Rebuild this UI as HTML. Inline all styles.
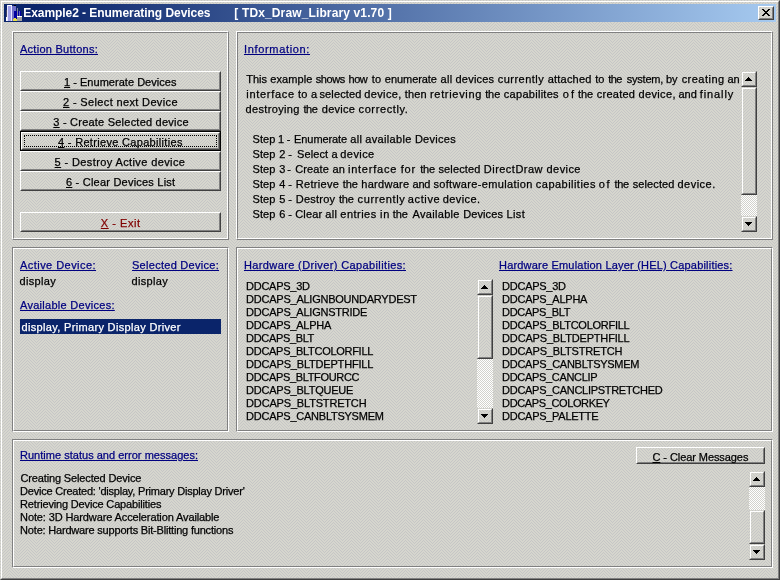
<!DOCTYPE html>
<html><head><meta charset="utf-8"><title>Example2 - Enumerating Devices</title>
<style>
html,body{margin:0;padding:0}
body{width:780px;height:580px;overflow:hidden;position:relative;background:#d1d1cb;font-family:"Liberation Sans",Arial,sans-serif;font-size:11px;color:#000}
#bg{position:absolute;left:0;top:0;width:780px;height:580px;display:block}
.a{position:absolute;box-sizing:border-box}
/* window frame */
#fr1{left:0;top:0;width:780px;height:580px;border:1px solid;border-color:transparent #404040 #404040 transparent}
#fr2{left:1px;top:1px;width:778px;height:578px;border:1px solid;border-color:#fff #808080 #808080 #fff}
#tb{left:4px;top:4px;width:772px;height:18px;background:linear-gradient(to right,#0a246a 0%,#0a246a 4%,#a6caf0 100%)}
/* panels */
.pr{border:1px solid;border-color:#fff #808080 #808080 #fff}
.pr:after{content:"";position:absolute;left:0;top:0;right:0;bottom:0;border:1px solid;border-color:#808080 #fff #fff #808080}
.pl{border:1px solid;border-color:#808080 #fff #fff #808080}
.pl:after{content:"";position:absolute;left:0;top:0;right:0;bottom:0;border:1px solid;border-color:#fff #808080 #808080 #fff}
/* delphi buttons */
.b{border:1px solid;border-color:#fff #404040 #404040 #fff}
.b:after{content:"";position:absolute;left:0;top:0;right:0;bottom:0;border:1px solid;border-color:transparent #808080 #808080 transparent}
.bf{border:1px solid #000}
.bf:before{content:"";position:absolute;left:0;top:0;right:0;bottom:0;border:1px solid;border-color:#fff #404040 #404040 #fff}
.bf:after{content:"";position:absolute;left:1px;top:1px;right:1px;bottom:1px;border:1px solid;border-color:transparent #808080 #808080 transparent}
.foc{border:1px dotted #000}
/* scrollbar pieces */
.sb{border:1px solid;border-color:transparent #404040 #404040 transparent}
.sb:after{content:"";position:absolute;left:0;top:0;right:0;bottom:0;border:1px solid;border-color:#fff #808080 #808080 #fff}
.trk{background-color:#d2d2cc;background-image:linear-gradient(45deg,#fff 25%,transparent 25%,transparent 75%,#fff 75%),linear-gradient(45deg,#fff 25%,transparent 25%,transparent 75%,#fff 75%);background-size:2px 2px;background-position:0 0,1px 1px}
.ar{width:0;height:0;border-style:solid}
.up{border-width:0 4px 4px 4px;border-color:transparent transparent #000 transparent}
.dn{border-width:4px 4px 0 4px;border-color:#000 transparent transparent transparent}
/* text */
.t{position:absolute;white-space:pre;line-height:13px;height:13px;font-size:11px;-webkit-text-stroke:0.25px currentColor}
.ttl{font-weight:bold;color:#fff;font-size:12px;-webkit-text-stroke:0}
.hd{color:#000080;text-decoration:underline}
.ex{color:#800000}
.wh{color:#fff}
u{text-decoration:underline}
#sel{left:20px;top:319px;width:201px;height:15px;background:#0a246a}
</style></head><body>
<svg id="bg" width="780" height="580" shape-rendering="crispEdges"><defs><pattern id="dp" width="18" height="6" patternUnits="userSpaceOnUse"><rect width="18" height="6" fill="#d6d6ce"/><g fill="#c6c6c6"><rect x="0" y="0" width="1" height="1"/><rect x="3" y="0" width="1" height="1"/><rect x="6" y="0" width="1" height="1"/><rect x="9" y="0" width="1" height="1"/><rect x="12" y="0" width="1" height="1"/><rect x="15" y="0" width="1" height="1"/><rect x="2" y="1" width="1" height="1"/><rect x="5" y="1" width="1" height="1"/><rect x="8" y="1" width="1" height="1"/><rect x="10" y="1" width="1" height="1"/><rect x="13" y="1" width="1" height="1"/><rect x="16" y="1" width="1" height="1"/><rect x="1" y="2" width="1" height="1"/><rect x="4" y="2" width="1" height="1"/><rect x="7" y="2" width="1" height="1"/><rect x="11" y="2" width="1" height="1"/><rect x="14" y="2" width="1" height="1"/><rect x="17" y="2" width="1" height="1"/><rect x="0" y="3" width="1" height="1"/><rect x="3" y="3" width="1" height="1"/><rect x="6" y="3" width="1" height="1"/><rect x="9" y="3" width="1" height="1"/><rect x="12" y="3" width="1" height="1"/><rect x="15" y="3" width="1" height="1"/><rect x="2" y="4" width="1" height="1"/><rect x="5" y="4" width="1" height="1"/><rect x="8" y="4" width="1" height="1"/><rect x="10" y="4" width="1" height="1"/><rect x="13" y="4" width="1" height="1"/><rect x="16" y="4" width="1" height="1"/><rect x="1" y="5" width="1" height="1"/><rect x="4" y="5" width="1" height="1"/><rect x="7" y="5" width="1" height="1"/><rect x="11" y="5" width="1" height="1"/><rect x="14" y="5" width="1" height="1"/><rect x="17" y="5" width="1" height="1"/></g></pattern></defs><rect width="780" height="580" fill="url(#dp)"/></svg>
<div class="a" id="fr1"></div><div class="a" id="fr2"></div>
<div class="a" id="tb"></div>
<svg class="a" style="left:6px;top:5px" width="16" height="16" shape-rendering="crispEdges">
<rect x="0" y="5" width="1" height="7" fill="#404060"/><rect x="0" y="12" width="1" height="4" fill="#fff"/>
<rect x="1" y="0" width="5" height="16" fill="#a0a0e8"/><rect x="1" y="0" width="1" height="16" fill="#e8e8ff"/><rect x="5" y="0" width="1" height="16" fill="#e8e8ff"/><rect x="2" y="0" width="4" height="1" fill="#fff"/>
<rect x="6" y="1" width="4" height="15" fill="#7070c8"/><rect x="8" y="0" width="2" height="1" fill="#000"/>
<rect x="8" y="6" width="7" height="8" fill="#0000a0"/>
<rect x="11" y="3" width="1" height="9" fill="#8080a0"/><rect x="13" y="6" width="1" height="5" fill="#6060c0"/>
<rect x="11" y="11" width="5" height="5" fill="#a0a0a0"/><rect x="11" y="11" width="5" height="1" fill="#fff"/>
<rect x="7" y="14" width="4" height="2" fill="#e8e040"/><rect x="8" y="13" width="2" height="1" fill="#e8e040"/>
</svg>
<!-- close button -->
<svg class="a" style="left:758px;top:6px" width="16" height="14" shape-rendering="crispEdges"><rect width="16" height="14" fill="url(#dp)"/></svg><div class="a b" style="left:758px;top:6px;width:16px;height:14px"></div>
<svg class="a" style="left:762px;top:9px" width="8" height="7" shape-rendering="crispEdges"><path d="M0 0h2v1h1v1h2v-1h1v-1h2v1h-1v1h-1v1h-1v1h1v1h1v1h1v1h-2v-1h-1v-1h-2v1h-1v1h-2v-1h1v-1h1v-1h1v-1h-1v-1h-1v-1h-1z" fill="#000"/></svg>
<!-- panels -->
<div class="a pr" style="left:12px;top:31px;width:217px;height:209px"></div>
<div class="a pr" style="left:236px;top:31px;width:537px;height:209px"></div>
<div class="a pl" style="left:12px;top:247px;width:217px;height:185px"></div>
<div class="a pl" style="left:236px;top:247px;width:537px;height:185px"></div>
<div class="a pl" style="left:12px;top:439px;width:761px;height:129px"></div>
<!-- action buttons -->
<div class="a b" style="left:20px;top:71px;width:201px;height:20px"></div>
<div class="a b" style="left:20px;top:91px;width:201px;height:20px"></div>
<div class="a b" style="left:20px;top:111px;width:201px;height:20px"></div>
<div class="a bf" style="left:20px;top:131px;width:201px;height:20px"></div>
<div class="a foc" style="left:24px;top:135px;width:193px;height:12px"></div>
<div class="a b" style="left:20px;top:151px;width:201px;height:20px"></div>
<div class="a b" style="left:20px;top:171px;width:201px;height:20px"></div>
<div class="a b" style="left:20px;top:212px;width:201px;height:20px"></div>
<div class="a b" style="left:636px;top:447px;width:129px;height:17px"></div>
<!-- selection -->
<div class="a" id="sel"></div>
<div class="a trk" style="left:741px;top:87px;width:16px;height:129px"></div>
<div class="a sb" style="left:741px;top:71px;width:16px;height:16px"></div>
<div class="a sb" style="left:741px;top:216px;width:16px;height:16px"></div>
<svg class="a" style="left:741px;top:87px" width="16" height="108" shape-rendering="crispEdges"><rect width="16" height="108" fill="url(#dp)"/></svg><div class="a sb" style="left:741px;top:87px;width:16px;height:108px"></div>
<svg class="a" style="left:745px;top:77px" width="7" height="4" shape-rendering="crispEdges"><path d="M3 0h1v1h1v1h1v1h1v1h-7v-1h1v-1h1v-1h1z" fill="#000"/></svg>
<svg class="a" style="left:745px;top:222px" width="7" height="4" shape-rendering="crispEdges"><path d="M0 0h7v1h-1v1h-1v1h-1v1h-1v-1h-1v-1h-1v-1h-1z" fill="#000"/></svg>
<div class="a trk" style="left:477px;top:295px;width:16px;height:113px"></div>
<div class="a sb" style="left:477px;top:279px;width:16px;height:16px"></div>
<div class="a sb" style="left:477px;top:408px;width:16px;height:16px"></div>
<svg class="a" style="left:477px;top:295px" width="16" height="64" shape-rendering="crispEdges"><rect width="16" height="64" fill="url(#dp)"/></svg><div class="a sb" style="left:477px;top:295px;width:16px;height:64px"></div>
<svg class="a" style="left:481px;top:285px" width="7" height="4" shape-rendering="crispEdges"><path d="M3 0h1v1h1v1h1v1h1v1h-7v-1h1v-1h1v-1h1z" fill="#000"/></svg>
<svg class="a" style="left:481px;top:414px" width="7" height="4" shape-rendering="crispEdges"><path d="M0 0h7v1h-1v1h-1v1h-1v1h-1v-1h-1v-1h-1v-1h-1z" fill="#000"/></svg>
<div class="a trk" style="left:749px;top:487px;width:16px;height:57px"></div>
<div class="a sb" style="left:749px;top:471px;width:16px;height:16px"></div>
<div class="a sb" style="left:749px;top:544px;width:16px;height:16px"></div>
<svg class="a" style="left:749px;top:510px" width="16" height="34" shape-rendering="crispEdges"><rect width="16" height="34" fill="url(#dp)"/></svg><div class="a sb" style="left:749px;top:510px;width:16px;height:34px"></div>
<svg class="a" style="left:753px;top:477px" width="7" height="4" shape-rendering="crispEdges"><path d="M3 0h1v1h1v1h1v1h1v1h-7v-1h1v-1h1v-1h1z" fill="#000"/></svg>
<svg class="a" style="left:753px;top:550px" width="7" height="4" shape-rendering="crispEdges"><path d="M0 0h7v1h-1v1h-1v1h-1v1h-1v-1h-1v-1h-1v-1h-1z" fill="#000"/></svg>
<div id="tx" style="position:absolute;left:0;top:0;width:780px;height:580px;will-change:transform">
<span class="t ttl" style="left:23.20px;top:7px;letter-spacing:-0.050px">Example2 - Enumerating Devices</span>
<span class="t ttl" style="left:234.33px;top:7px;letter-spacing:0.131px">[ TDx_Draw_Library v1.70 ]</span>
<span class="t hd" style="left:20.00px;top:43px;letter-spacing:0.268px">Action Buttons:</span>
<span class="t hd" style="left:244.00px;top:43px;letter-spacing:0.660px">Information:</span>
<span class="t hd" style="left:20.00px;top:259px;letter-spacing:0.451px">Active Device:</span>
<span class="t hd" style="left:132.00px;top:259px;letter-spacing:0.279px">Selected Device:</span>
<span class="t hd" style="left:20.00px;top:299px;letter-spacing:0.285px">Available Devices:</span>
<span class="t hd" style="left:244.00px;top:259px;letter-spacing:0.375px">Hardware (Driver) Capabilities:</span>
<span class="t hd" style="left:499.00px;top:259px;letter-spacing:0.194px">Hardware Emulation Layer (HEL) Capabilities:</span>
<span class="t hd" style="left:20.00px;top:449px;letter-spacing:0.021px">Runtime status and error messages:</span>
<span class="t bt" style="left:64.00px;top:76px;letter-spacing:0.026px"><u>1</u> - Enumerate Devices</span>
<span class="t bt" style="left:63.00px;top:96px;letter-spacing:0.357px"><u>2</u> - Select next Device</span>
<span class="t bt" style="left:53.30px;top:116px;letter-spacing:0.223px"><u>3</u> - Create Selected device</span>
<span class="t bt" style="left:58.00px;top:136px;letter-spacing:0.318px"><u>4</u> - Retrieve Capabilities</span>
<span class="t bt" style="left:54.60px;top:156px;letter-spacing:0.385px"><u>5</u> - Destroy Active device</span>
<span class="t bt" style="left:66.00px;top:176px;letter-spacing:0.217px"><u>6</u> - Clear Devices List</span>
<span class="t bt ex" style="left:100.80px;top:217px;letter-spacing:0.547px"><u>X</u> - Exit</span>
<span class="t bt" style="left:652.50px;top:451px;letter-spacing:-0.076px"><u>C</u> - Clear Messages</span>
<span class="t tx" style="left:246.25px;top:73px;letter-spacing:-0.045px">This </span>
<span class="t tx" style="left:270.23px;top:73px;letter-spacing:0.113px">example </span>
<span class="t tx" style="left:315.69px;top:73px;letter-spacing:-0.419px">shows </span>
<span class="t tx" style="left:348.54px;top:73px;letter-spacing:-0.522px">how </span>
<span class="t tx" style="left:371.83px;top:73px;letter-spacing:0.155px">to </span>
<span class="t tx" style="left:384.83px;top:73px;letter-spacing:-0.054px">enumerate </span>
<span class="t tx" style="left:440.53px;top:73px;letter-spacing:0.349px">all </span>
<span class="t tx" style="left:455.54px;top:73px;letter-spacing:0.210px">devices </span>
<span class="t tx" style="left:497.73px;top:73px;letter-spacing:0.476px">currently </span>
<span class="t tx" style="left:547.73px;top:73px;letter-spacing:0.211px">attached </span>
<span class="t tx" style="left:595.13px;top:73px;letter-spacing:0.155px">to </span>
<span class="t tx" style="left:608.33px;top:73px;letter-spacing:-0.568px">the </span>
<span class="t tx" style="left:626.69px;top:73px;letter-spacing:-0.216px">system, </span>
<span class="t tx" style="left:666.09px;top:73px;letter-spacing:-0.087px">by </span>
<span class="t tx" style="left:681.63px;top:73px;letter-spacing:0.477px">creating </span>
<span class="t tx" style="left:727.43px;top:73px;letter-spacing:0.046px">an</span>
<span class="t tx" style="left:246.26px;top:88px;letter-spacing:0.717px">interface </span>
<span class="t tx" style="left:298.03px;top:88px;letter-spacing:0.255px">to </span>
<span class="t tx" style="left:311.11px;top:88px;">a </span>
<span class="t tx" style="left:319.49px;top:88px;letter-spacing:0.135px">selected </span>
<span class="t tx" style="left:364.34px;top:88px;letter-spacing:0.350px">device, </span>
<span class="t tx" style="left:404.63px;top:88px;letter-spacing:0.224px">then </span>
<span class="t tx" style="left:429.97px;top:88px;letter-spacing:0.689px">retrieving </span>
<span class="t tx" style="left:485.13px;top:88px;letter-spacing:-0.068px">the </span>
<span class="t tx" style="left:503.83px;top:88px;letter-spacing:0.279px">capabilites </span>
<span class="t tx" style="left:562.74px;top:88px;letter-spacing:2.072px">of </span>
<span class="t tx" style="left:578.03px;top:88px;letter-spacing:-0.068px">the </span>
<span class="t tx" style="left:596.83px;top:88px;letter-spacing:0.231px">created </span>
<span class="t tx" style="left:638.54px;top:88px;letter-spacing:0.350px">device, </span>
<span class="t tx" style="left:678.53px;top:88px;letter-spacing:-0.038px">and </span>
<span class="t tx" style="left:699.84px;top:88px;letter-spacing:0.876px">finally</span>
<span class="t tx" style="left:245.54px;top:103px;letter-spacing:0.347px">destroying </span>
<span class="t tx" style="left:303.53px;top:103px;letter-spacing:-0.518px">the </span>
<span class="t tx" style="left:321.84px;top:103px;letter-spacing:0.231px">device </span>
<span class="t tx" style="left:358.53px;top:103px;letter-spacing:0.617px">correctly.</span>
<span class="t tx" style="left:252.50px;top:133px;letter-spacing:0.111px">Step </span>
<span class="t tx" style="left:278.04px;top:133px;">1 </span>
<span class="t tx" style="left:286.67px;top:133px;">- </span>
<span class="t tx" style="left:294.10px;top:133px;letter-spacing:-0.090px">Enumerate </span>
<span class="t tx" style="left:350.33px;top:133px;letter-spacing:0.349px">all </span>
<span class="t tx" style="left:365.33px;top:133px;letter-spacing:0.317px">available </span>
<span class="t tx" style="left:414.90px;top:133px;letter-spacing:0.279px">Devices</span>
<span class="t tx" style="left:252.50px;top:148px;letter-spacing:0.111px">Step </span>
<span class="t tx" style="left:279.29px;top:148px;">2 </span>
<span class="t tx" style="left:288.37px;top:148px;">- </span>
<span class="t tx" style="left:297.00px;top:148px;letter-spacing:0.102px">Select </span>
<span class="t tx" style="left:331.46px;top:148px;">a </span>
<span class="t tx" style="left:340.34px;top:148px;letter-spacing:0.411px">device</span>
<span class="t tx" style="left:252.50px;top:163px;letter-spacing:0.111px">Step </span>
<span class="t tx" style="left:279.32px;top:163px;">3 </span>
<span class="t tx" style="left:287.17px;top:163px;">- </span>
<span class="t tx" style="left:295.24px;top:163px;letter-spacing:0.106px">Create </span>
<span class="t tx" style="left:332.53px;top:163px;letter-spacing:0.146px">an </span>
<span class="t tx" style="left:347.96px;top:163px;letter-spacing:0.767px">interface </span>
<span class="t tx" style="left:400.64px;top:163px;letter-spacing:0.851px">for </span>
<span class="t tx" style="left:420.13px;top:163px;letter-spacing:-0.118px">the </span>
<span class="t tx" style="left:438.39px;top:163px;letter-spacing:0.149px">selected </span>
<span class="t tx" style="left:483.80px;top:163px;letter-spacing:0.476px">DirectDraw </span>
<span class="t tx" style="left:546.54px;top:163px;letter-spacing:0.431px">device</span>
<span class="t tx" style="left:252.50px;top:178px;letter-spacing:0.111px">Step </span>
<span class="t tx" style="left:279.23px;top:178px;">4 </span>
<span class="t tx" style="left:288.37px;top:178px;">- </span>
<span class="t tx" style="left:295.80px;top:178px;letter-spacing:0.290px">Retrieve </span>
<span class="t tx" style="left:342.83px;top:178px;letter-spacing:-0.068px">the </span>
<span class="t tx" style="left:361.24px;top:178px;letter-spacing:0.299px">hardware </span>
<span class="t tx" style="left:412.53px;top:178px;letter-spacing:-0.238px">and </span>
<span class="t tx" style="left:433.39px;top:178px;letter-spacing:0.358px">software-emulation </span>
<span class="t tx" style="left:535.83px;top:178px;letter-spacing:0.468px">capabilities </span>
<span class="t tx" style="left:598.74px;top:178px;letter-spacing:1.772px">of </span>
<span class="t tx" style="left:614.53px;top:178px;letter-spacing:-0.318px">the </span>
<span class="t tx" style="left:632.69px;top:178px;letter-spacing:0.106px">selected </span>
<span class="t tx" style="left:677.54px;top:178px;letter-spacing:0.469px">device.</span>
<span class="t tx" style="left:252.50px;top:193px;letter-spacing:0.111px">Step </span>
<span class="t tx" style="left:279.30px;top:193px;">5 </span>
<span class="t tx" style="left:288.37px;top:193px;">- </span>
<span class="t tx" style="left:295.80px;top:193px;letter-spacing:0.221px">Destroy </span>
<span class="t tx" style="left:339.03px;top:193px;letter-spacing:-0.268px">the </span>
<span class="t tx" style="left:357.53px;top:193px;letter-spacing:0.626px">currently </span>
<span class="t tx" style="left:407.83px;top:193px;letter-spacing:0.624px">active </span>
<span class="t tx" style="left:442.84px;top:193px;letter-spacing:0.386px">device.</span>
<span class="t tx" style="left:252.50px;top:208px;letter-spacing:0.111px">Step </span>
<span class="t tx" style="left:279.25px;top:208px;">6 </span>
<span class="t tx" style="left:288.37px;top:208px;">- </span>
<span class="t tx" style="left:295.24px;top:208px;letter-spacing:0.164px">Clear </span>
<span class="t tx" style="left:325.33px;top:208px;letter-spacing:0.349px">all </span>
<span class="t tx" style="left:340.33px;top:208px;letter-spacing:0.475px">entries </span>
<span class="t tx" style="left:380.06px;top:208px;letter-spacing:0.789px">in </span>
<span class="t tx" style="left:392.83px;top:208px;letter-spacing:-0.068px">the </span>
<span class="t tx" style="left:412.48px;top:208px;letter-spacing:0.321px">Available </span>
<span class="t tx" style="left:463.30px;top:208px;letter-spacing:0.079px">Devices </span>
<span class="t tx" style="left:506.60px;top:208px;letter-spacing:0.355px">List</span>
<span class="t tx" style="left:19.54px;top:275px;letter-spacing:0.324px">display</span>
<span class="t tx" style="left:131.54px;top:275px;letter-spacing:0.340px">display</span>
<span class="t tx wh" style="left:21.54px;top:321px;letter-spacing:0.330px">display, Primary Display Driver</span>
<span class="t tx" style="left:246.10px;top:280px;letter-spacing:-0.274px">DDCAPS_3D</span>
<span class="t tx" style="left:246.10px;top:293px;letter-spacing:-0.239px">DDCAPS_ALIGNBOUNDARYDEST</span>
<span class="t tx" style="left:246.10px;top:306px;letter-spacing:-0.243px">DDCAPS_ALIGNSTRIDE</span>
<span class="t tx" style="left:246.10px;top:319px;letter-spacing:-0.264px">DDCAPS_ALPHA</span>
<span class="t tx" style="left:246.10px;top:332px;letter-spacing:-0.342px">DDCAPS_BLT</span>
<span class="t tx" style="left:246.10px;top:345px;letter-spacing:-0.289px">DDCAPS_BLTCOLORFILL</span>
<span class="t tx" style="left:246.10px;top:358px;letter-spacing:-0.187px">DDCAPS_BLTDEPTHFILL</span>
<span class="t tx" style="left:246.10px;top:371px;letter-spacing:-0.331px">DDCAPS_BLTFOURCC</span>
<span class="t tx" style="left:246.10px;top:384px;letter-spacing:-0.227px">DDCAPS_BLTQUEUE</span>
<span class="t tx" style="left:246.10px;top:397px;letter-spacing:-0.174px">DDCAPS_BLTSTRETCH</span>
<span class="t tx" style="left:246.10px;top:410px;letter-spacing:-0.246px">DDCAPS_CANBLTSYSMEM</span>
<span class="t tx" style="left:502.10px;top:280px;letter-spacing:-0.262px">DDCAPS_3D</span>
<span class="t tx" style="left:502.10px;top:293px;letter-spacing:-0.246px">DDCAPS_ALPHA</span>
<span class="t tx" style="left:502.10px;top:306px;letter-spacing:-0.331px">DDCAPS_BLT</span>
<span class="t tx" style="left:502.10px;top:319px;letter-spacing:-0.272px">DDCAPS_BLTCOLORFILL</span>
<span class="t tx" style="left:502.10px;top:332px;letter-spacing:-0.170px">DDCAPS_BLTDEPTHFILL</span>
<span class="t tx" style="left:502.10px;top:345px;letter-spacing:-0.186px">DDCAPS_BLTSTRETCH</span>
<span class="t tx" style="left:502.10px;top:358px;letter-spacing:-0.268px">DDCAPS_CANBLTSYSMEM</span>
<span class="t tx" style="left:502.10px;top:371px;letter-spacing:-0.320px">DDCAPS_CANCLIP</span>
<span class="t tx" style="left:502.10px;top:384px;letter-spacing:-0.288px">DDCAPS_CANCLIPSTRETCHED</span>
<span class="t tx" style="left:502.10px;top:397px;letter-spacing:-0.375px">DDCAPS_COLORKEY</span>
<span class="t tx" style="left:502.10px;top:410px;letter-spacing:-0.276px">DDCAPS_PALETTE</span>
<span class="t tx" style="left:20.44px;top:472px;letter-spacing:-0.138px">Creating Selected Device</span>
<span class="t tx" style="left:20.10px;top:485px;letter-spacing:-0.217px">Device Created: 'display, Primary Display Driver'</span>
<span class="t tx" style="left:20.10px;top:498px;letter-spacing:-0.166px">Retrieving Device Capabilities</span>
<span class="t tx" style="left:20.10px;top:511px;letter-spacing:-0.119px">Note: 3D Hardware Acceleration Available</span>
<span class="t tx" style="left:20.10px;top:524px;letter-spacing:-0.192px">Note: Hardware supports Bit-Blitting functions</span>
</div>
</body></html>
